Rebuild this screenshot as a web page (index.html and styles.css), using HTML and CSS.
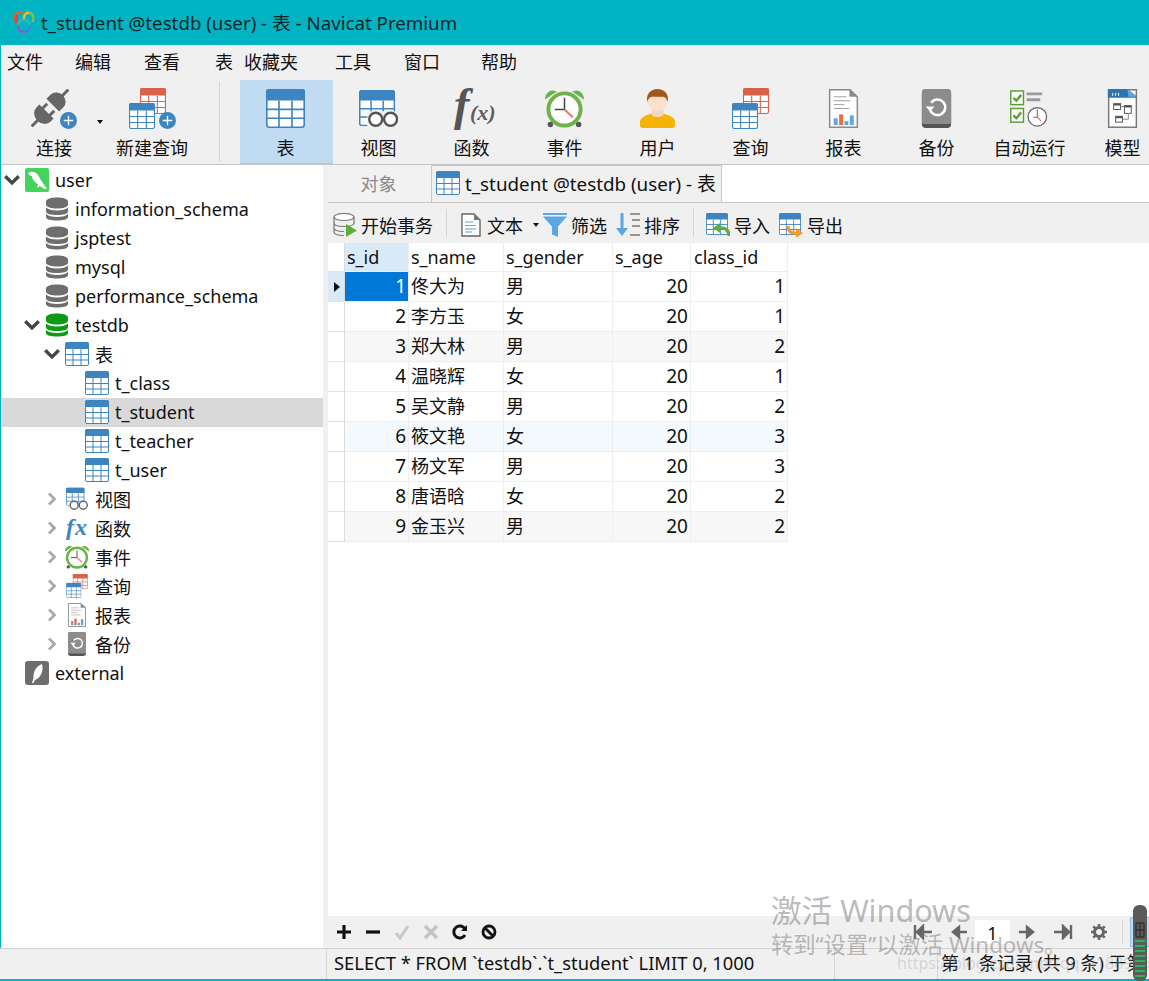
FILE: index.html
```html
<!DOCTYPE html>
<html lang="zh-CN">
<head>
<meta charset="utf-8">
<title>t_student @testdb (user) - 表 - Navicat Premium</title>
<link rel="stylesheet" href="styles.css">
</head>
<body>
<svg class="defs" width="0" height="0" aria-hidden="true">
  <defs>
    <symbol id="tbl" viewBox="0 0 24 24">
      <rect x=".5" y=".5" width="23" height="23" rx="1.500" fill="#fff" stroke="currentColor"/>
      <path d="M0 2a2 2 0 0 1 2-2h20a2 2 0 0 1 2 2v5H0z" fill="currentColor"/>
      <path d="M8 7v17M16 7v17M0 12.500h24M0 18h24" stroke="currentColor" stroke-width="1" fill="none"/>
    </symbol>
    <symbol id="query" viewBox="0 0 37 41">
      <use href="#tbl" class="c-red" x="11" y="0" width="26" height="26"/>
      <use href="#tbl" class="c-blue" x="0" y="15" width="26" height="26"/>
    </symbol>
    <symbol id="view" viewBox="0 0 42 40">
      <use href="#tbl" class="c-blue" x="0" y="0" width="39" height="39"/>
      <rect x="9" y="23" width="33" height="17" fill="#f0f0f0"/>
      <g fill="#fff" stroke="#555" stroke-width="2.600"><circle cx="18" cy="31.500" r="7"/><circle cx="34" cy="31.500" r="7"/></g>
    </symbol>
    <symbol id="view-s" viewBox="0 0 42 40">
      <use href="#tbl" class="c-blue" x="0" y="0" width="36" height="32"/>
      <g fill="#fff" stroke="#666" stroke-width="2.500"><circle cx="16" cy="31" r="7"/><circle cx="32" cy="31" r="7"/></g>
    </symbol>
    <symbol id="clock" viewBox="0 0 40 40">
      <path d="M1 9a7 7 0 0 1 9-6zM39 9a7 7 0 0 0-9-6z" fill="#6eb24a" stroke="#6eb24a" stroke-width="2"/>
      <circle cx="5.500" cy="36.500" r="2.800" fill="#555"/><circle cx="34.500" cy="36.500" r="2.800" fill="#555"/>
      <circle cx="20" cy="21" r="16.500" fill="#fff" stroke="#6eb24a" stroke-width="4"/>
      <path d="M20 9v12H10" fill="none" stroke="#444" stroke-width="1.500"/>
      <path d="M20 21l8.500 8" stroke="#ea7560" stroke-width="2"/>
    </symbol>
    <symbol id="user" viewBox="0 0 36 40">
      <path d="M0 34c0-5 6-7 12-9h12c6 2 12 4 12 9v3a3 3 0 0 1-3 3H3a3 3 0 0 1-3-3z" fill="#f4b400"/>
      <path d="M12 20h12v7c-2 2.500-10 2.500-12 0z" fill="#f1d6c4"/>
      <circle cx="18" cy="12" r="10.500" fill="#fbe0cc"/>
      <path d="M7.500 13C6 5 11 0 18 0s12 5 10.500 13c-1-3-3-5-5-5h-11c-2 0-4 2-5 5z" fill="#a4551a"/>
    </symbol>
    <symbol id="report" viewBox="0 0 30 40">
      <path d="M.8.8h21l7.400 7.400v31H.8z" fill="#fff" stroke="#8a8a8a" stroke-width="1.500"/>
      <path d="M21 0l9 8h-9z" fill="#8c8c8c"/>
      <path d="M5 8h13M5 12h17M5 16h11M5 20h16" stroke="#a0a0a0" stroke-width="1"/>
      <rect x="5" y="30" width="4" height="7" fill="#5ca6e2"/><rect x="10.500" y="26" width="4" height="11" fill="#ea6d4b"/>
      <rect x="16" y="33" width="4" height="4" fill="#5ca6e2"/><rect x="21.500" y="27" width="4" height="10" fill="#5ca6e2"/>
    </symbol>
    <symbol id="backup" viewBox="0 0 30 40">
      <rect width="30" height="40" rx="4" fill="#555"/>
      <path d="M0 4a4 4 0 0 1 4-4h22a4 4 0 0 1 4 4v30a2 2 0 0 1-2 2H2a2 2 0 0 1-2-2z" fill="#8c8c8c"/>
      <path d="M9.500 14a8 8 0 1 1-1.200 7" fill="none" stroke="#fff" stroke-width="2.600"/>
      <path d="M4 18h9l-4.500 5z" fill="#fff"/>
    </symbol>
    <symbol id="auto" viewBox="0 0 40 40">
      <g fill="#fff" stroke="#5d9e36" stroke-width="1.500"><rect x=".8" y="2" width="13" height="14"/><rect x=".8" y="20" width="13" height="14"/></g>
      <path d="M3.500 9l3 3 5-6M3.500 27l3 3 5-6" fill="none" stroke="#5d9e36" stroke-width="2.500"/>
      <path d="M17 5h16M17 11h14" stroke="#9a9a9a" stroke-width="3"/>
      <circle cx="28" cy="28.500" r="9.500" fill="#fff" stroke="#666" stroke-width="1.300"/>
      <path d="M28 21v8h-4" fill="none" stroke="#666" stroke-width="1"/><path d="M28 29l4 4" stroke="#ea7560" stroke-width="1.200"/>
    </symbol>
    <symbol id="model" viewBox="0 0 30 40">
      <rect x=".8" y=".8" width="28.400" height="38.400" fill="#fff" stroke="#777" stroke-width="1.500"/>
      <path d="M0 0h20l10 8v1H0z" fill="#2f74ad"/><path d="M20 0l10 8-9 0z" fill="#5ca6e2"/>
      <path d="M5 4v3M8 4v3M11 4v3" stroke="#fff"/>
      <g fill="#fff" stroke="#555"><rect x="6" y="15" width="7" height="6"/><rect x="17" y="17" width="7" height="8"/><rect x="8" y="28" width="7" height="6"/></g>
      <path d="M6 15h7v2H6zM17 17h7v2h-7zM8 28h7v2H8z" fill="#555"/>
      <path d="M13 18h4M15 31h6v-6" fill="none" stroke="#888"/>
    </symbol>
    <symbol id="plug" viewBox="0 0 38 38">
      <g fill="#666" transform="rotate(45 19 19)">
        <rect x="17.500" y="-7" width="3" height="9"/>
        <path d="M10 15V9a9 8 0 0 1 18 0v6z"/>
        <rect x="12.500" y="18" width="3" height="7"/><rect x="22.500" y="18" width="3" height="7"/>
        <path d="M9 24h20v4a10 9 0 0 1-20 0z"/>
        <rect x="17.500" y="36" width="3" height="9"/>
      </g>
    </symbol>
    <symbol id="plus-badge" viewBox="0 0 18 18">
      <circle cx="9" cy="9" r="9" fill="#3d85c0"/>
      <path d="M9 4v10M4 9h10" stroke="#fff" stroke-width="1.400"/>
    </symbol>
    <symbol id="db" viewBox="0 0 24 24">
      <path d="M1 4.500C1 2 6 .5 12 .5s11 1.500 11 4v3c0 2.500-5 4-11 4S1 10 1 7.500z" fill="currentColor"/>
      <path d="M1 10.500c2 2 6 3 11 3s9-1 11-3v4c0 2.500-5 3.500-11 3.500S1 17 1 14.500z" fill="currentColor"/>
      <path d="M1 17c2 2 6 3 11 3s9-1 11-3v3c0 2.500-5 3.500-11 3.500S1 22.500 1 20z" fill="currentColor"/>
    </symbol>
    <symbol id="mysql" viewBox="0 0 24 24">
      <rect width="24" height="24" rx="2" fill="#44d45c"/>
      <path d="M3 5C6 3 10 3 13 7c2 3 3 6 7 11l2 3c-3 0-5-1-7-3l-3 2 1-4c-3-1-6-5-6-8-2 0-3-1-4-3z" fill="#fff"/>
    </symbol>
    <symbol id="feather" viewBox="0 0 24 24">
      <rect width="24" height="24" rx="3" fill="#6d6d6d"/>
      <path d="M17 3c1.500 5 0 12-5 15l-2 1-1.500 3H7l1.500-5C8 11 11 5 17 3z" fill="#fff"/>
    </symbol>
    <symbol id="down" viewBox="0 0 12 8"><path d="M1.500 1.500L6 6l4.500-4.500" fill="none" stroke="#444" stroke-width="2.200"/></symbol>
    <symbol id="right" viewBox="0 0 9 14"><path d="M1.500 1.500L7 7l-5.500 5.500" fill="none" stroke="#aaa" stroke-width="2.800"/></symbol>
    <symbol id="doc" viewBox="0 0 20 24">
      <path d="M1 1h12l6 6v16H1z" fill="#fff" stroke="#666" stroke-width="1.400"/>
      <path d="M13 1l6 6h-6z" fill="#777"/>
      <path d="M4 9h8M4 12.500h11M4 16h11M4 19h7" stroke="#5ca6e2" stroke-width="1.100"/>
    </symbol>
    <symbol id="tx" viewBox="0 0 24 24">
      <ellipse cx="11" cy="4" rx="10" ry="3.500" fill="#fff" stroke="#777" stroke-width="1.200"/>
      <path d="M1 4v15c0 2 4 3.500 10 3.500M21 4v7M1 10c0 2 4 3.500 10 3.500s10-1.500 10-3.500M1 15c0 2 4 3.500 10 3.500" fill="none" stroke="#777" stroke-width="1.200"/>
      <path d="M13 11l11 6.500L13 24z" fill="#5dad3a"/>
    </symbol>
    <symbol id="filter" viewBox="0 0 24 24">
      <path d="M0 0h24v2H0z" fill="#5ca6e2"/><path d="M0 3.500h24l-9 10V24l-6-2.500v-8z" fill="#5ca6e2"/>
    </symbol>
    <symbol id="sort" viewBox="0 0 24 24">
      <path d="M6 0v18" stroke="#5ca6e2" stroke-width="3"/><path d="M0 15h12l-6 8z" fill="#5ca6e2"/>
      <path d="M14 1h10M16 7h8M16 13h8M14 22h10" stroke="#777" stroke-width="1.400"/>
    </symbol>
    <symbol id="imp" viewBox="0 0 24 24">
      <use href="#tbl" class="c-blue" width="22" height="22"/>
      <path d="M23 23c0-6-4-9-11-8" fill="none" stroke="#5dad3a" stroke-width="3.200"/><path d="M7 15l7-5v10z" fill="#5dad3a"/>
    </symbol>
    <symbol id="exp" viewBox="0 0 24 24">
      <use href="#tbl" class="c-blue" width="22" height="22"/>
      <path d="M9 13c0 6 4 8 10 7" fill="none" stroke="#f29b24" stroke-width="3.200"/><path d="M24 20l-7-5v10z" fill="#f29b24"/>
    </symbol>
    <symbol id="logo" viewBox="0 0 22 22">
      <g fill="none" stroke-width="2.400" stroke-linecap="round">
        <path d="M3 11C0 5 3 1 7 1s5 3 4 7" stroke="#e8622c"/>
        <path d="M3 11c-.5-2 0-4 1-6" stroke="#e23d4a"/>
        <path d="M11 7c0-4 3-6 6-5" stroke="#f0c02c"/>
        <path d="M17 2c3 1 4 4 3 8" stroke="#7dc04a"/>
        <path d="M5 15a6 6 0 0 1 12 0" stroke="#2fb9b0"/>
        <path d="M17 15a6 6 0 0 1-6 6" stroke="#3a86d8"/>
        <path d="M11 21a6 6 0 0 1-6-6" stroke="#8d5cc4"/>
      </g>
    </symbol>
  </defs>
</svg>

<div class="app">
  <header class="titlebar">
    <svg class="logo"><use href="#logo"/></svg>
    <span class="title">t_student @testdb (user) - 表 - Navicat Premium</span>
  </header>

  <nav class="menu">
    <span>文件</span><span>编辑</span><span>查看</span><span>表</span><span>收藏夹</span><span>工具</span><span>窗口</span><span>帮助</span>
  </nav>

  <div class="toolbar">
    <div class="tool-group first">
      <div class="tool conn">
        <span class="ic-wrap">
          <svg class="ic-plug"><use href="#plug"/></svg>
          <svg class="badge"><use href="#plus-badge"/></svg>
        </span>
        <span class="tool-label">连接</span>
      </div>
      <span class="caret caret-conn"></span>
      <div class="tool newq">
        <span class="ic-wrap">
          <svg class="ic-query-big"><use href="#query"/></svg>
          <svg class="badge"><use href="#plus-badge"/></svg>
        </span>
        <span class="tool-label">新建查询</span>
      </div>
    </div>
    <div class="tool-sep"></div>
    <div class="tool-group main">
      <div class="tool active"><span class="ic-wrap"><svg class="ic c-blue"><use href="#tbl"/></svg></span><span class="tool-label">表</span></div>
      <div class="tool"><span class="ic-wrap"><svg class="ic"><use href="#view"/></svg></span><span class="tool-label">视图</span></div>
      <div class="tool"><span class="ic-wrap"><svg class="ic fx" viewBox="0 0 46 40"><text x="5" y="32" class="fx-f">f</text><text x="21" y="32" class="fx-x">(x)</text></svg></span><span class="tool-label">函数</span></div>
      <div class="tool"><span class="ic-wrap"><svg class="ic"><use href="#clock"/></svg></span><span class="tool-label">事件</span></div>
      <div class="tool"><span class="ic-wrap"><svg class="ic"><use href="#user"/></svg></span><span class="tool-label">用户</span></div>
      <div class="tool"><span class="ic-wrap"><svg class="ic ic-q"><use href="#query"/></svg></span><span class="tool-label">查询</span></div>
      <div class="tool"><span class="ic-wrap"><svg class="ic"><use href="#report"/></svg></span><span class="tool-label">报表</span></div>
      <div class="tool"><span class="ic-wrap"><svg class="ic"><use href="#backup"/></svg></span><span class="tool-label">备份</span></div>
      <div class="tool"><span class="ic-wrap"><svg class="ic"><use href="#auto"/></svg></span><span class="tool-label">自动运行</span></div>
      <div class="tool"><span class="ic-wrap"><svg class="ic"><use href="#model"/></svg></span><span class="tool-label">模型</span></div>
    </div>
  </div>

  <div class="body">
    <aside class="tree">
      <div class="node"><svg class="arrow"><use href="#down"/></svg><svg class="ico"><use href="#mysql"/></svg><span>user</span></div>
      <div class="node l1"><i class="arrow"></i><svg class="ico c-grey"><use href="#db"/></svg><span>information_schema</span></div>
      <div class="node l1"><i class="arrow"></i><svg class="ico c-grey"><use href="#db"/></svg><span>jsptest</span></div>
      <div class="node l1"><i class="arrow"></i><svg class="ico c-grey"><use href="#db"/></svg><span>mysql</span></div>
      <div class="node l1"><i class="arrow"></i><svg class="ico c-grey"><use href="#db"/></svg><span>performance_schema</span></div>
      <div class="node l1"><svg class="arrow"><use href="#down"/></svg><svg class="ico c-green"><use href="#db"/></svg><span>testdb</span></div>
      <div class="node l2"><svg class="arrow"><use href="#down"/></svg><svg class="ico c-blue"><use href="#tbl"/></svg><span>表</span></div>
      <div class="node l3"><i class="arrow"></i><svg class="ico c-blue"><use href="#tbl"/></svg><span>t_class</span></div>
      <div class="node l3 selected"><i class="arrow"></i><svg class="ico c-blue"><use href="#tbl"/></svg><span>t_student</span></div>
      <div class="node l3"><i class="arrow"></i><svg class="ico c-blue"><use href="#tbl"/></svg><span>t_teacher</span></div>
      <div class="node l3"><i class="arrow"></i><svg class="ico c-blue"><use href="#tbl"/></svg><span>t_user</span></div>
      <div class="node l2"><svg class="arrow closed"><use href="#right"/></svg><svg class="ico"><use href="#view-s"/></svg><span>视图</span></div>
      <div class="node l2"><svg class="arrow closed"><use href="#right"/></svg><svg class="ico ico-fx" viewBox="0 0 24 24"><text x="1" y="19" class="fx-s">fx</text></svg><span>函数</span></div>
      <div class="node l2"><svg class="arrow closed"><use href="#right"/></svg><svg class="ico"><use href="#clock"/></svg><span>事件</span></div>
      <div class="node l2"><svg class="arrow closed"><use href="#right"/></svg><svg class="ico"><use href="#query"/></svg><span>查询</span></div>
      <div class="node l2"><svg class="arrow closed"><use href="#right"/></svg><svg class="ico"><use href="#report"/></svg><span>报表</span></div>
      <div class="node l2"><svg class="arrow closed"><use href="#right"/></svg><svg class="ico"><use href="#backup"/></svg><span>备份</span></div>
      <div class="node"><i class="arrow"></i><svg class="ico"><use href="#feather"/></svg><span>external</span></div>
    </aside>

    <main class="panel">
      <div class="tabs">
        <div class="tab muted">对象</div>
        <div class="tab current"><svg class="ico c-blue"><use href="#tbl"/></svg><span>t_student @testdb (user) - 表</span></div>
      </div>

      <div class="subbar">
        <div class="sub sub-tx"><svg class="sub-ic"><use href="#tx"/></svg><span>开始事务</span></div>
        <div class="sub-sep"></div>
        <div class="sub sub-text"><svg class="sub-ic doc"><use href="#doc"/></svg><span>文本</span><span class="caret"></span></div>
        <div class="sub sub-f"><svg class="sub-ic"><use href="#filter"/></svg><span>筛选</span></div>
        <div class="sub sub-s"><svg class="sub-ic"><use href="#sort"/></svg><span>排序</span></div>
        <div class="sub-sep sep2"></div>
        <div class="sub sub-i"><svg class="sub-ic"><use href="#imp"/></svg><span>导入</span></div>
        <div class="sub sub-e"><svg class="sub-ic"><use href="#exp"/></svg><span>导出</span></div>
      </div>

      <div class="grid-area">
        <table class="grid">
          <colgroup><col class="c0"><col class="c1"><col class="c2"><col class="c3"><col class="c4"><col class="c5"></colgroup>
          <thead>
            <tr><th class="rh"></th><th class="hl">s_id</th><th>s_name</th><th>s_gender</th><th>s_age</th><th class="last">class_id</th></tr>
          </thead>
          <tbody>
            <tr><td class="rh hl"><span class="marker"></span></td><td class="num cur">1</td><td>佟大为</td><td>男</td><td class="num">20</td><td class="num">1</td></tr>
            <tr><td class="rh"></td><td class="num">2</td><td>李方玉</td><td>女</td><td class="num">20</td><td class="num">1</td></tr>
            <tr class="alt"><td class="rh"></td><td class="num">3</td><td>郑大林</td><td>男</td><td class="num">20</td><td class="num">2</td></tr>
            <tr><td class="rh"></td><td class="num">4</td><td>温晓辉</td><td>女</td><td class="num">20</td><td class="num">1</td></tr>
            <tr><td class="rh"></td><td class="num">5</td><td>吴文静</td><td>男</td><td class="num">20</td><td class="num">2</td></tr>
            <tr class="hover"><td class="rh"></td><td class="num">6</td><td>筱文艳</td><td>女</td><td class="num">20</td><td class="num">3</td></tr>
            <tr><td class="rh"></td><td class="num">7</td><td>杨文军</td><td>男</td><td class="num">20</td><td class="num">3</td></tr>
            <tr><td class="rh"></td><td class="num">8</td><td>唐语晗</td><td>女</td><td class="num">20</td><td class="num">2</td></tr>
            <tr class="alt"><td class="rh"></td><td class="num">9</td><td>金玉兴</td><td>男</td><td class="num">20</td><td class="num">2</td></tr>
          </tbody>
        </table>
      </div>

      <div class="gridbar">
        <div class="edit-btns">
          <svg class="b" viewBox="0 0 16 16"><path d="M8 1v14M1 8h14" stroke="#111" stroke-width="3.200"/></svg>
          <svg class="b" viewBox="0 0 16 16"><path d="M1 8h14" stroke="#111" stroke-width="3.200"/></svg>
          <svg class="b" viewBox="0 0 16 16"><path d="M2 9l4 5 8-12" fill="none" stroke="#c8c8c8" stroke-width="3"/></svg>
          <svg class="b" viewBox="0 0 16 16"><path d="M2 2l12 12M14 2L2 14" stroke="#c4c4c4" stroke-width="3.400"/></svg>
          <svg class="b" viewBox="0 0 16 16"><path d="M13 11a6 6 0 1 1 0-6" fill="none" stroke="#111" stroke-width="3"/><path d="M15 1v6H9z" fill="#111"/></svg>
          <svg class="b" viewBox="0 0 16 16"><circle cx="8" cy="8" r="6" fill="none" stroke="#111" stroke-width="2.800"/><path d="M4 4l8 8" stroke="#111" stroke-width="2.800"/></svg>
        </div>
        <div class="pager">
          <svg class="p" viewBox="0 0 20 16"><path d="M2 1v14M19 8H6M10 2L4 8l6 6z" fill="#666" stroke="#666" stroke-width="2.400"/></svg>
          <svg class="p" viewBox="0 0 20 16"><path d="M18 8H6M10 3L4 8l6 5z" fill="#666" stroke="#666" stroke-width="2.400"/></svg>
          <span class="page-no">1</span>
          <svg class="p" viewBox="0 0 20 16"><path d="M2 8h12M10 3l6 5-6 5z" fill="#666" stroke="#666" stroke-width="2.400"/></svg>
          <svg class="p" viewBox="0 0 20 16"><path d="M18 1v14M1 8h13M10 2l6 6-6 6z" fill="#666" stroke="#666" stroke-width="2.400"/></svg>
          <svg class="p gear" viewBox="0 0 16 16"><circle cx="8" cy="8" r="4.500" fill="none" stroke="#666" stroke-width="3"/><path d="M8 0v3M8 13v3M0 8h3M13 8h3M2.300 2.300l2 2M11.700 11.700l2 2M13.700 2.300l-2 2M4.300 11.700l-2 2" stroke="#666" stroke-width="2.600"/></svg>
          <span class="pg-sep"></span>
          <span class="form-btn"></span>
        </div>
      </div>
    </main>
  </div>

  <footer class="status">
    <div class="st-left"></div>
    <div class="st-sql">SELECT * FROM `testdb`.`t_student` LIMIT 0, 1000</div>
    <div class="st-mid"></div>
    <div class="st-rec">第 1 条记录 (共 9 条) 于第</div>
  </footer>
</div>

<div class="wm wm1">激活 Windows</div>
<div class="wm wm2">转到“设置”以激活 Windows。</div>
<div class="wm wm3">https://blog.csdn.net/qq_41889265</div>
<svg class="meter" viewBox="0 0 14 76">
  <rect width="14" height="76" rx="6" fill="#5b5b5b"/>
  <path d="M3 18h8v14H3zM7 18v14M3 25h8" fill="none" stroke="#222" stroke-width="1"/>
  <path d="M2 36h10M2 41h10M2 46h10M2 51h10M2 56h10M2 61h10M2 66h10M2 71h10" stroke="#1fd45b" stroke-width="1.500"/>
</svg>
</body>
</html>
```

FILE: styles.css
```css
* { box-sizing: border-box; }
html, body { margin: 0; padding: 0; }
body {
  width: 1149px;
  height: 981px;
  overflow: hidden;
  position: relative;
  font-family: "Noto Sans", "Noto Sans CJK SC", sans-serif;
  font-size: 18px;
  color: #111;
  background: #f0f0f0;
}
.defs { position: absolute; }
.c-blue { color: #3d85c0; }
.c-red { color: #d9634a; }
.c-grey { color: #6e6e6e; }
.c-green { color: #0c9a17; }

.app { display: flex; flex-direction: column; height: 981px; border-left: 1px solid #00b4c3; }

.titlebar { height: 45px; flex: none; margin-left: -1px; background: #00b4c3; display: flex; align-items: center; padding: 0 0 2px 13px; }
.logo { width: 22px; height: 22px; margin-right: 6px; }
.title { font-size: 18.720px; color: #10262a; }

.menu {
  height: 35px; flex: none; display: grid;
  grid-template-columns: 68px 69px 71px 29px 91px 69px 77px auto;
  padding: 0 0 0 6px; align-items: center; line-height: 35px;
}

.toolbar { height: 85px; flex: none; display: flex; border-bottom: 1px solid #c4c4c4; }
.tool-group { display: flex; }
.tool-group.first { width: 218px; flex: none; position: relative; }
.tool-sep { width: 1px; height: 80px; margin-top: 2px; background: #d5d5d5; flex: none; }
.tool-group.main { margin-left: 20px; }
.tool { width: 93px; flex: none; height: 84px; padding-right: 2px; display: flex; flex-direction: column; align-items: center; }
.tool.active { background: #c0dbf2; border-bottom: 1px solid #a9c9e6; }
.tool.conn { width: 54px; margin-left: 26px; padding: 0; }
.tool.newq { width: 90px; margin-left: 4px; padding: 0; }
.ic-wrap { height: 40px; margin-top: 8px; display: flex; align-items: center; justify-content: center; position: relative; }
.ic { width: 39px; height: 39px; display: block; }
.ic.fx { width: 46px; height: 40px; overflow: visible; }
.ic.ic-q { width: 37px; height: 41px; }
.tool-label { margin-top: 8px; line-height: 24px; white-space: nowrap; }
.fx-f { font: italic bold 46px "Liberation Serif", serif; fill: #555; }
.fx-x { font: italic bold 22px "Liberation Serif", serif; fill: #5d5d5d; }
.fx-s { font: italic bold 24px "Liberation Serif", serif; fill: #3d85c0; letter-spacing: 1px; }
.ico-fx { overflow: visible; }
.ic-plug { width: 38px; height: 38px; margin-right: 8px; }
.badge { width: 17px; height: 17px; position: absolute; right: 0; bottom: -1px; }
.ic-query-big { width: 37px; height: 41px; margin: 0 10px 0 0; }
.caret { display: inline-block; width: 0; height: 0; border: 3.500px solid transparent; border-top: 4px solid #111; border-bottom: 0; }
.caret-conn { margin: 40px 0 0 16px; align-self: flex-start; }

.body { flex: 1; display: flex; min-height: 0; }
.tree { width: 322px; flex: none; background: #fff; margin-right: 5px; }
.node { height: 29px; display: flex; align-items: center; padding-left: 1px; white-space: nowrap; }
.node.l1 { padding-left: 21px; }
.node.l2 { padding-left: 41px; }
.node.l3 { padding-left: 61px; }
.node.selected { background: #d9d9d9; margin-top: 1px; margin-bottom: -1px; padding-bottom: 2px; }
.arrow { width: 20px; height: 12px; flex: none; display: block; }
.arrow.closed { height: 14px; }
.ico { width: 24px; height: 24px; flex: none; margin: 0 6px 0 3px; display: block; }

.panel { flex: 1; min-width: 0; display: flex; flex-direction: column; }
.tabs { height: 38px; flex: none; display: flex; background: #fff; border-bottom: 1px solid #c8c8c8; }
.tab { height: 37px; display: flex; align-items: center; background: #f0f0f0; padding-bottom: 2px; }
.tab.muted { width: 103px; justify-content: center; color: #8a8a8a; background: #f2f2f2; padding-right: 2px; }
.tab.current { width: 291px; border-left: 1px solid #c8c8c8; border-right: 1px solid #c8c8c8; border-top: 1px solid #c8c8c8; padding-left: 1px; font-size: 18.800px; }
.tab.current .ico { margin-right: 5px; }

.subbar { height: 40px; flex: none; display: flex; align-items: center; padding: 4px 0 0 5px; }
.sub { display: flex; align-items: center; gap: 4px; }
.sub-ic { width: 24px; height: 24px; flex: none; display: block; }
.sub-ic.doc { margin-right: 2px; width: 20px; }
.sub-sep { width: 1px; height: 28px; margin: -4px 14px 0 13px; background: #d5d5d5; flex: none; }
.sub-text .caret { margin: 0 0 0 6px; }
.sub-f { margin-left: 4px; }
.sub-s { margin-left: 9px; }
.sep2 { margin: -4px 12px 0 13px; }
.sub-e { margin-left: 9px; }

.grid-area { flex: 1; min-height: 0; background: #fff; }
.grid { table-layout: fixed; border-collapse: separate; border-spacing: 0; width: 460px; }
.c0 { width: 17px; } .c1 { width: 64px; } .c2 { width: 95px; } .c3 { width: 109px; } .c4 { width: 78px; } .c5 { width: 97px; }
.grid th, .grid td { padding: 0 2px; border-right: 1px solid #eeeeee; border-bottom: 1px solid #eeeeee; font-weight: 400; text-align: left; line-height: 20px; overflow: hidden; white-space: nowrap; }
.grid th { height: 29px; background: #fff; }
.grid th.last { padding-left: 3px; }
.grid td { height: 30px; background: #fff; padding-bottom: 2px; }
.grid .rh { border-right: 1px solid #dcdcdc; padding: 0; border-bottom: 1px solid #e4e4e4; }
.grid th.hl, .grid td.hl { background: #d8e9f8; }
.grid td.num { text-align: right; font-size: 19px; }
.grid td.cur { background: #0078d7; color: #fff; }
.grid .alt td:not(.rh) { background: #f7f7f7; }
.grid .hover td:not(.rh) { background: #f3f9fd; }
.marker { display: block; width: 0; height: 0; margin-left: 6px; border: 5px solid transparent; border-left: 6px solid #111; border-right: 0; }

.gridbar { height: 32px; flex: none; display: flex; align-items: center; justify-content: space-between; background: #f0f0f0; }
.edit-btns { display: flex; gap: 13px; padding-left: 8px; }
.b { width: 16px; height: 16px; display: block; }
.pager { display: flex; align-items: center; }
.p { width: 20px; height: 16px; display: block; margin-right: 16px; }
.page-no { width: 35px; height: 24px; line-height: 26px; background: #fff; text-align: center; margin: 0 7px 0 -1px; }
.gear { width: 16px; margin: 0 15px 0 2px; }
.p:first-child + .p { margin-right: 7px; }
.pg-sep { width: 1px; height: 24px; background: #d5d5d5; margin-right: 7px; }
.form-btn { width: 19px; height: 30px; background: #c0dbf2; border: 1px solid #8fc0ea; border-right: 0; }

.status { height: 33px; flex: none; display: flex; border-top: 1px solid #d2d2d2; border-bottom: 2px solid #00b4c3; margin-left: -1px; background: #f0f0f0; overflow: hidden; line-height: 28px; white-space: nowrap; }
.st-left { width: 327px; flex: none; border-right: 1px solid #d5d5d5; }
.st-sql { width: 508px; flex: none; padding-left: 7px; font-size: 18.350px; border-right: 1px solid #d5d5d5; }
.st-mid { width: 103px; flex: none; border-right: 1px solid #d5d5d5; }
.st-rec { padding-left: 3px; }

.wm { position: absolute; color: rgba(130,130,130,.55); white-space: nowrap; pointer-events: none; }
.wm1 { left: 771px; top: 888px; font-size: 30.600px; line-height: 44px; }
.wm2 { left: 771px; top: 930px; font-size: 22.300px; line-height: 30px; }
.wm3 { left: 897px; top: 951px; font-size: 16px; line-height: 24px; color: rgba(170,170,170,.4); }
.meter { position: absolute; left: 1133px; top: 905px; width: 14px; height: 76px; }
```
